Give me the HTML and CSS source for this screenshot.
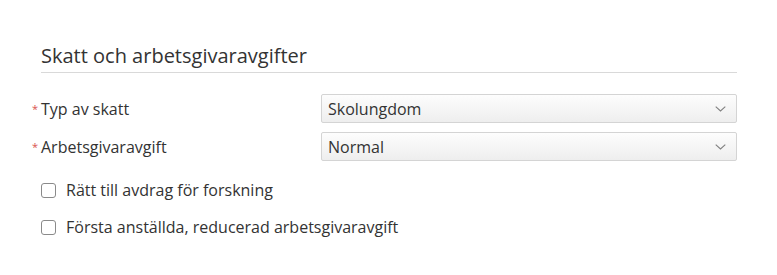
FILE: index.html
```html
<!DOCTYPE html>
<html lang="sv">
<head>
  <meta charset="UTF-8" />
  <title>Skatt och arbetsgivaravgifter</title>
  <link rel="stylesheet" href="styles.css">
</head>
<body>

<div class="section">
  <h2 class="section-title">Skatt och arbetsgivaravgifter</h2>

  <div class="form-row">
    <label class="form-label required" for="skatt">Typ av skatt</label>
    <div class="select">
      <span class="select-value" id="skatt">Skolungdom</span>
      <svg class="chevron" width="11" height="6" viewBox="0 0 11 6"><path d="M0.7 0.7 L5.5 5 L10.3 0.7" fill="none" stroke="#808080" stroke-width="1.1"/></svg>
    </div>
  </div>

  <div class="form-row">
    <label class="form-label required" for="avgift">Arbetsgivaravgift</label>
    <div class="select">
      <span class="select-value" id="avgift">Normal</span>
      <svg class="chevron" width="11" height="6" viewBox="0 0 11 6"><path d="M0.7 0.7 L5.5 5 L10.3 0.7" fill="none" stroke="#808080" stroke-width="1.1"/></svg>
    </div>
  </div>

  <label class="check-row">
    <span class="checkbox"></span>
    Rätt till avdrag för forskning
  </label>
  <label class="check-row">
    <span class="checkbox"></span>
    Första anställda, reducerad arbetsgivaravgift
  </label>
</div>

</body>
</html>
```

FILE: styles.css
```css
body {
  margin: 0;
  background: #fff;
  font-family: "Open Sans", sans-serif;
  color: #333;
}
.section {
  padding: 42px 40px 0 41px;
  width: 696px;
}
.section-title {
  font-size: 20px;
  font-weight: normal;
  color: #333;
  margin: 0 0 21px 0;
  padding-bottom: 3px;
  border-bottom: 1px solid #d9d9d9;
  line-height: 27px;
}
.form-row {
  display: flex;
  align-items: center;
  margin-bottom: 9px;
}
.form-label {
  width: 280px;
  font-size: 16px;
  position: relative;
}
.required::before {
  content: '*';
  color: #d9534f;
  position: absolute;
  left: -9px;
  top: 3px;
  font-size: 11px;
}
.select {
  flex: 1;
  height: 27px;
  border: 1px solid #d4d4d4;
  border-radius: 2px;
  background: linear-gradient(#fdfdfd, #eeeeee);
  display: flex;
  align-items: center;
  justify-content: space-between;
  padding: 0 10px 0 6px;
  font-size: 16px;
}
.chevron {
  display: block;
  margin-top: 1px;
}
.check-row {
  display: flex;
  align-items: center;
  font-size: 16px;
  height: 22px;
  margin-top: 18px;
}
.check-row + .check-row {
  margin-top: 15px;
}
.checkbox {
  width: 13px;
  height: 13px;
  border: 1px solid #8a8a8a;
  border-radius: 3px;
  margin-right: 10px;
  background: #fff;
}
```
